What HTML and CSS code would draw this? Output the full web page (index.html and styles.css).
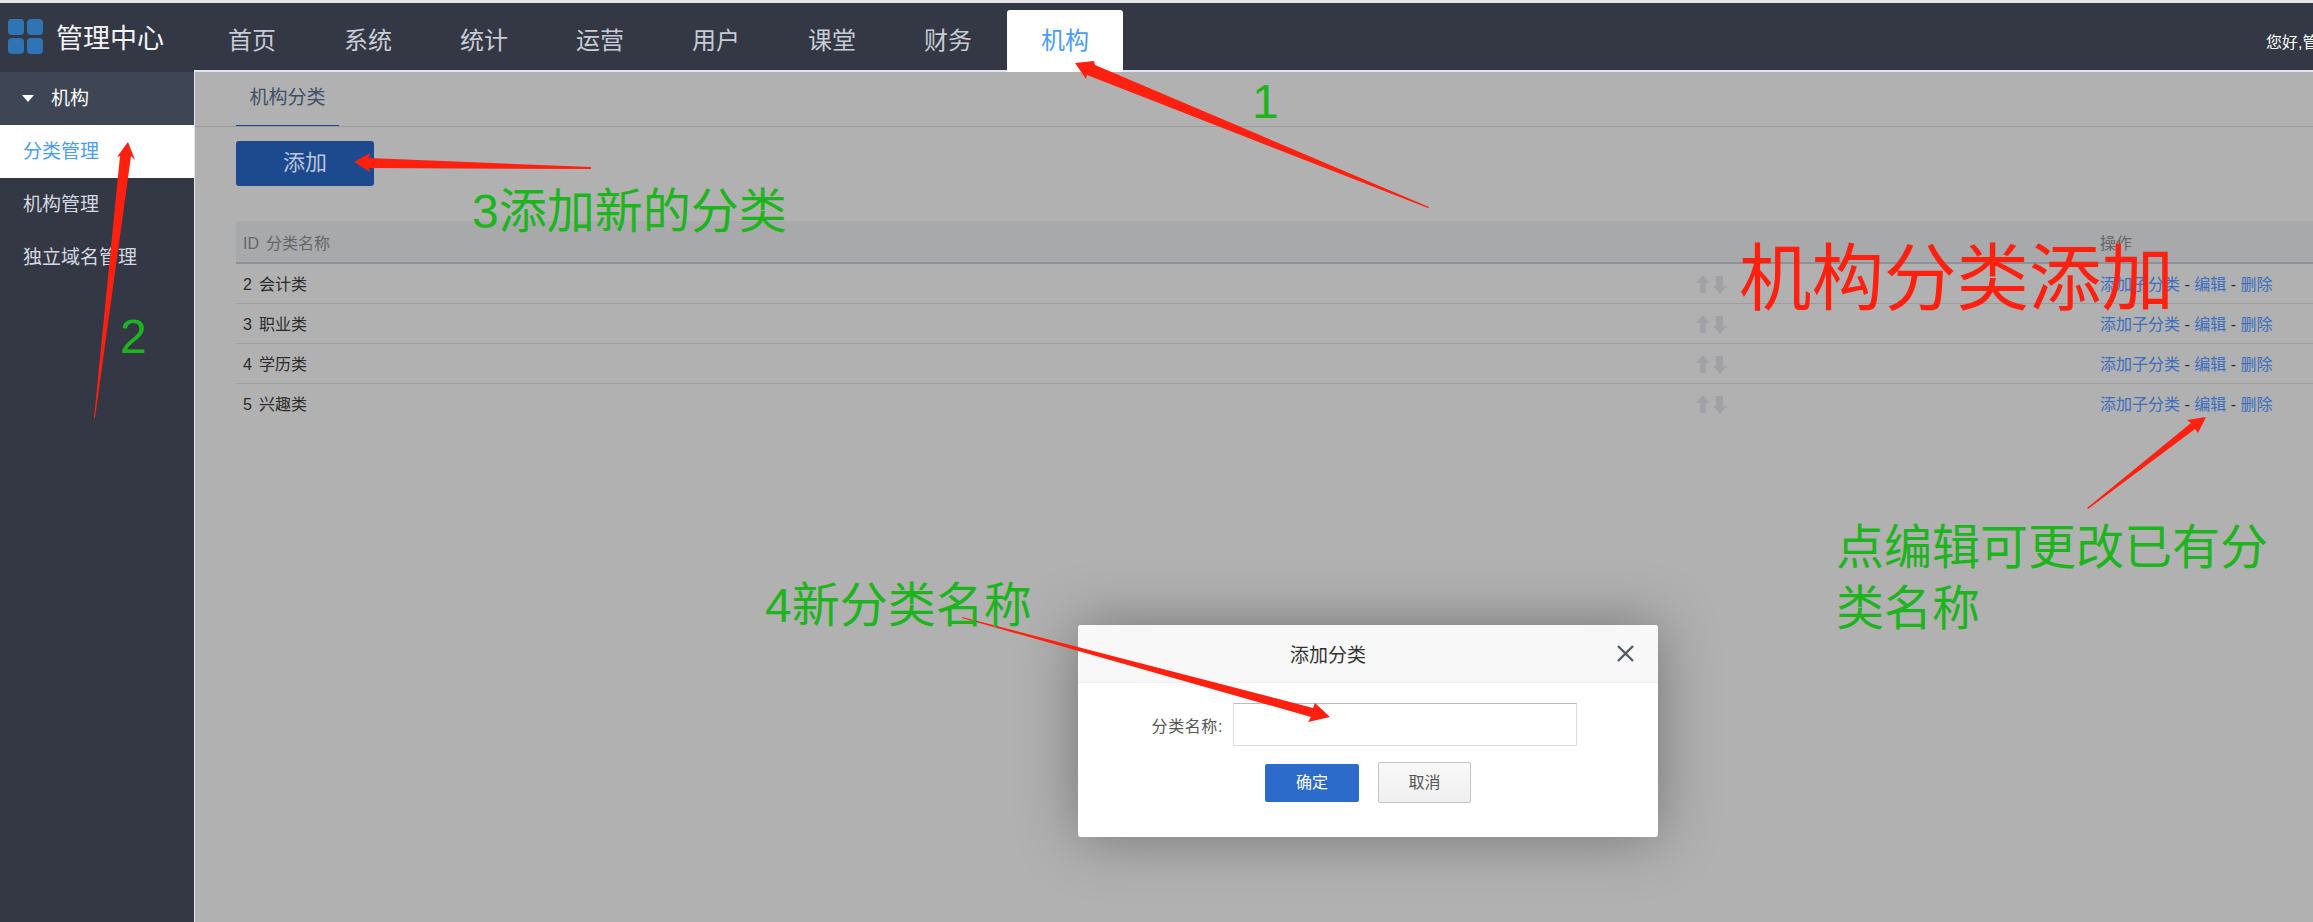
FILE: index.html
```html
<!DOCTYPE html>
<html>
<head>
<meta charset="utf-8">
<title>管理中心</title>
<link rel="stylesheet" href="styles.css">
</head>
<body>
<div class="header">
  <div class="brand">
    <svg class="logo" width="35" height="35" viewBox="0 0 35 35">
      <rect x="0" y="0" width="16" height="16" rx="4"/>
      <rect x="19" y="0" width="16" height="16" rx="4"/>
      <rect x="0" y="19" width="16" height="16" rx="4"/>
      <rect x="19" y="19" width="16" height="16" rx="4"/>
    </svg>
    <span>管理中心</span>
  </div>
  <div class="topbar">
    <a class="nav">首页</a>
    <a class="nav">系统</a>
    <a class="nav">统计</a>
    <a class="nav">运营</a>
    <a class="nav">用户</a>
    <a class="nav">课堂</a>
    <a class="nav">财务</a>
    <a class="nav active">机构</a>
    <div class="user">您好,管理员</div>
  </div>
</div>

<div class="layout">
  <div class="sidebar">
    <div class="side-head"><i class="caret"></i>机构</div>
    <a class="side-item current">分类管理</a>
    <a class="side-item">机构管理</a>
    <a class="side-item">独立域名管理</a>
  </div>
  <div class="main">
    <div class="tabs"><span class="tab">机构分类</span></div>
    <a class="addbtn">添加</a>
    <table class="grid">
      <colgroup><col class="c1"><col class="c2"><col class="c3"></colgroup>
      <tr>
        <th><span class="id">ID</span>分类名称</th>
        <th></th>
        <th>操作</th>
      </tr>
      <tr>
        <td><span class="id">2</span>会计类</td>
        <td><svg class="sort" width="31" height="19" viewBox="0 0 31 19"><path d="M7 0L14 8H10V18H4V8H0Z"/><path d="M20 1V11H17L24 19L31 11H27V1Z"/></svg></td>
        <td><a>添加子分类</a> - <a>编辑</a> - <a>删除</a></td>
      </tr>
      <tr>
        <td><span class="id">3</span>职业类</td>
        <td><svg class="sort" width="31" height="19" viewBox="0 0 31 19"><path d="M7 0L14 8H10V18H4V8H0Z"/><path d="M20 1V11H17L24 19L31 11H27V1Z"/></svg></td>
        <td><a>添加子分类</a> - <a>编辑</a> - <a>删除</a></td>
      </tr>
      <tr>
        <td><span class="id">4</span>学历类</td>
        <td><svg class="sort" width="31" height="19" viewBox="0 0 31 19"><path d="M7 0L14 8H10V18H4V8H0Z"/><path d="M20 1V11H17L24 19L31 11H27V1Z"/></svg></td>
        <td><a>添加子分类</a> - <a>编辑</a> - <a>删除</a></td>
      </tr>
      <tr class="last">
        <td><span class="id">5</span>兴趣类</td>
        <td><svg class="sort" width="31" height="19" viewBox="0 0 31 19"><path d="M7 0L14 8H10V18H4V8H0Z"/><path d="M20 1V11H17L24 19L31 11H27V1Z"/></svg></td>
        <td><a>添加子分类</a> - <a>编辑</a> - <a>删除</a></td>
      </tr>
    </table>
  </div>
</div>

<!-- dialog -->
<div class="modal">
  <div class="modal-head">
    <span class="modal-title">添加分类</span>
    <svg class="close" width="17" height="17" viewBox="0 0 17 17"><path d="M1 1L16 16M16 1L1 16"/></svg>
  </div>
  <div class="modal-row">
    <label class="modal-label">分类名称:</label>
    <input class="modal-input" type="text">
  </div>
  <div class="modal-btns">
    <a class="btn-ok">确定</a>
    <a class="btn-cancel">取消</a>
  </div>
</div>

<!-- notes drawn over the screenshot -->
<svg class="arrows" width="2313" height="922" viewBox="0 0 2313 922">
  <polygon points="1429,207 1428,208 1087,75 1086,79 1075,63 1094,61 1095,65"/>
  <polygon points="94,418 95,418 131,156 135,160 128,142 117,157 120,156"/>
  <polygon points="591,167 591,169 369,168 370,172 354,162 370,153 369,158"/>
  <polygon points="962,617 962,618 1311,717 1308,722 1330,717 1315,703 1313,708"/>
  <polygon points="2087,508 2088,509 2195,429 2198,433 2206,417 2187,420 2191,423"/>
</svg>
<div class="note n1">1</div>
<div class="note n2">2</div>
<div class="note n3">3添加新的分类</div>
<div class="note n4">4新分类名称</div>
<div class="note n5">点编辑可更改已有分类名称</div>
<div class="bigtitle">机构分类添加</div>
</body>
</html>
```

FILE: styles.css
```css
html, body {
  margin: 0;
  padding: 0;
}
body {
  width: 2313px;
  height: 922px;
  overflow: hidden;
  position: relative;
  background: #b1b1b1;
  font-family: "Liberation Sans", "Noto Sans CJK SC", sans-serif;
  font-size: 16px;
}

/* top bar */
.header {
  display: flex;
  height: 69px;
  background: #333844;
  border-top: 3px solid #e4e6ea;
}
.brand {
  width: 194px;
  flex: none;
  display: flex;
  align-items: flex-start;
  gap: 13px;
  padding: 16px 0 0 8px;
  box-sizing: border-box;
  color: #f2f3f5;
  font-size: 27px;
  line-height: 42px;
}
.brand span {
  margin-top: -1px;
}
.logo rect {
  fill: #2f75b5;
}
.topbar {
  flex: 1;
  min-width: 0;
  display: flex;
  height: 67px;
  border-bottom: 2px solid #e2e5ee;
}
.nav {
  width: 116px;
  height: 61px;
  margin-top: 7px;
  line-height: 61px;
  text-align: center;
  font-size: 24px;
  color: #c8ccd6;
}
.nav.active {
  height: 62px;
  margin-left: 1px;
  margin-right: -1px;
  background: #fff;
  color: #4a9cf5;
  border-radius: 3px 3px 0 0;
}
.user {
  margin-left: auto;
  width: 47px;
  overflow: hidden;
  white-space: nowrap;
  color: #fff;
  padding-top: 28px;
  line-height: 24px;
}

.layout {
  display: flex;
  height: 850px;
}

/* left menu */
.sidebar {
  width: 194px;
  flex: none;
  background: #333844;
  border-right: 1px solid #e2e5ee;
  font-size: 19px;
}
.side-head {
  height: 53px;
  line-height: 53px;
  background: #3e4655;
  color: #fff;
  display: flex;
  align-items: center;
}
.caret {
  width: 0;
  height: 0;
  margin: 0 17px 0 22px;
  border-left: 6px solid transparent;
  border-right: 6px solid transparent;
  border-top: 7px solid #fff;
}
.side-item {
  display: block;
  height: 53px;
  line-height: 53px;
  padding-left: 23px;
  color: #d5d9e2;
}
.side-item.current {
  background: #fff;
  color: #4a9cf5;
}

/* content */
.main {
  flex: 1;
  min-width: 0;
  padding-left: 41px;
}
.tabs {
  height: 54px;
  margin-left: -41px;
  padding-left: 41px;
  border-bottom: 1px solid #9b9b9c;
  display: flex;
}
.tab {
  width: 103px;
  height: 54px;
  box-sizing: border-box;
  line-height: 52px;
  text-align: center;
  font-size: 19px;
  color: #3f4e68;
  border-bottom: 1px solid #1d4a8f;
}
.addbtn {
  display: block;
  width: 138px;
  height: 45px;
  margin-top: 14px;
  background: #1d4a8f;
  border-radius: 3px;
  line-height: 44px;
  text-align: center;
  font-size: 22px;
  color: #b9c5d8;
}
.grid {
  width: 2077px;
  margin-top: 35px;
  table-layout: fixed;
  border-collapse: collapse;
}
.c1 { width: 1453px; }
.c2 { width: 404px; }
.c3 { width: 220px; }
.grid th {
  height: 41px;
  padding: 0 0 0 7px;
  background: #a8a9ab;
  border-bottom: 2px solid #8e9196;
  text-align: left;
  font-weight: normal;
  color: #666;
}
.grid td {
  height: 37px;
  padding: 0 0 2px 7px;
  border-bottom: 1px solid #9d9d9f;
  color: #2b2b2b;
}
.grid tr.last td {
  border-bottom: none;
}
.grid a {
  color: #3b6ebf;
}
.id {
  margin-right: 7px;
}
.sort {
  display: block;
  margin-top: 3px;
  fill: #a0a2a5;
}

/* dialog */
.modal {
  position: absolute;
  left: 1078px;
  top: 625px;
  width: 580px;
  height: 212px;
  background: #fff;
  border-radius: 3px;
  box-shadow: 0 0 60px rgba(0, 0, 0, .35);
}
.modal-head {
  display: flex;
  align-items: center;
  height: 57px;
  background: #f8f8f8;
  border-bottom: 1px solid #eee;
  border-radius: 3px 3px 0 0;
}
.modal-title {
  margin-left: 212px;
  font-size: 19px;
  color: #333;
}
.close {
  margin-left: auto;
  margin-right: 24px;
}
.close path {
  stroke: #555a66;
  stroke-width: 2.4;
  fill: none;
}
.modal-row {
  display: flex;
  align-items: center;
  gap: 10px;
  margin-top: 20px;
}
.modal-label {
  width: 145px;
  text-align: right;
  letter-spacing: .6px;
  color: #555;
}
.modal-input {
  width: 344px;
  height: 43px;
  box-sizing: border-box;
  margin: 0;
  padding: 0;
  background: #fff;
  border: 1px solid #ddd;
  border-top-color: #bbb;
}
.modal-btns {
  display: flex;
  align-items: center;
  gap: 19px;
  margin-top: 16px;
  padding-left: 187px;
}
.btn-ok {
  width: 94px;
  height: 38px;
  background: #2d6bcb;
  border-radius: 2px;
  line-height: 38px;
  text-align: center;
  color: #fff;
}
.btn-cancel {
  width: 93px;
  height: 41px;
  box-sizing: border-box;
  background: linear-gradient(#f9f9f9, #efefef);
  border: 1px solid #c4c4c4;
  border-radius: 2px;
  line-height: 39px;
  text-align: center;
  color: #555;
}

/* annotations */
.arrows {
  position: absolute;
  left: 0;
  top: 0;
  fill: #ff2010;
}
.note {
  position: absolute;
  font-size: 48px;
  line-height: 62px;
  color: #1eb41e;
}
.n1 { left: 1252px; top: 71px; }
.n2 { left: 120px; top: 306px; }
.n3 { left: 472px; top: 181px; white-space: nowrap; }
.n4 { left: 765px; top: 575px; white-space: nowrap; }
.n5 { left: 1836px; top: 517px; width: 440px; line-height: 61px; }
.bigtitle {
  position: absolute;
  left: 1739px;
  top: 229px;
  font-size: 72.5px;
  line-height: 100px;
  color: #ff2010;
  white-space: nowrap;
}
```
